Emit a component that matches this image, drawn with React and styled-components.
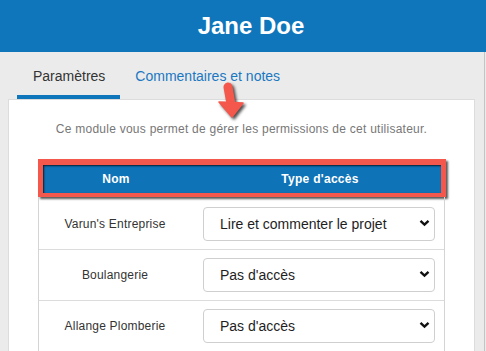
import React from "react";
import styled, { createGlobalStyle } from "styled-components";

const GlobalStyle = createGlobalStyle`
  html, body { margin: 0; padding: 0; }
  body {
    font-family: "Liberation Sans", Arial, sans-serif;
    background: #ebebeb;
  }
  * { box-sizing: border-box; }
`;

const Page = styled.div`
  position: relative;
  width: 486px;
  height: 351px;
  overflow: hidden;
  background: #ebebeb;
`;

const Header = styled.header`
  height: 52px;
  background: #0f76bc;
  color: #fff;
  display: flex;
  align-items: center;
  justify-content: center;
  padding-left: 16px;
  font-size: 24px;
  font-weight: 700;
`;

const Body = styled.div`
  width: 485px;
  height: 299px;
  border-right: 1px solid #c4c4c4;
  padding: 0 9px 0 8px;
  display: flex;
  flex-direction: column;
`;

const Tabs = styled.nav`
  display: flex;
  height: 47px;
  padding-left: 9px;
`;

const Tab = styled.div`
  height: 47px;
  padding: 4px ${(p) => (p.$active ? "15px" : "16px")} 0 ${(p) => (p.$active ? "16px" : "15px")};
  display: flex;
  align-items: center;
  font-size: 14px;
  color: ${(p) => (p.$active ? "#333" : "#1a78c2")};
  border-bottom: 4px solid ${(p) => (p.$active ? "#0f76bc" : "transparent")};
  white-space: nowrap;
`;

const Panel = styled.section`
  flex: 1;
  background: #fff;
  border: 1px solid #dcdcdc;
  border-bottom: none;
  padding: 21px 0 0 29px;
`;

const Description = styled.p`
  margin: 0 0 22px -29px;
  font-size: 12px;
  line-height: 16px;
  color: #777;
  text-align: center;
  letter-spacing: 0.25px;
`;

const Table = styled.div`
  width: 408px;
`;

const HeadBar = styled.div`
  height: 38px;
  border: 5px solid #f4574b;
  border-top-width: 6px;
  border-bottom-width: 4px;
  background: #0f73b8;
  box-shadow: inset 1px 1px 2px rgba(0, 0, 0, 0.75), 2px 2px 2px rgba(0, 0, 0, 0.65);
  display: grid;
  grid-template-columns: 146px 1fr;
  align-items: center;
  color: #fff;
  font-size: 12px;
  font-weight: 700;
  letter-spacing: 0.3px;
`;

const HeadCell = styled.div`
  text-align: center;
  padding-left: ${(p) => (p.$shift ? "10px" : "0")};
`;

const Rows = styled.div`
  width: 407px;
  border-left: 1px solid #d4d4d4;
  border-right: 1px solid #d4d4d4;
  padding-top: 2px;
`;

const Row = styled.div`
  display: grid;
  grid-template-columns: 156px 1fr;
  align-items: center;
  padding: 8px 9px 8px 0;
  border-bottom: 1px solid #dcdcdc;
`;

const NameCell = styled.div`
  text-align: center;
  font-size: 12px;
  color: #333;
  letter-spacing: 0.2px;
  padding-right: 4px;
`;

const SelectWrap = styled.div`
  position: relative;
  margin-left: 8px;
  height: 34px;
`;

const Select = styled.select`
  appearance: none;
  -webkit-appearance: none;
  width: 100%;
  height: 34px;
  border: 1px solid #cfcfcf;
  border-radius: 4px;
  background: #fff;
  padding: 0 24px 0 16px;
  font-family: "Liberation Sans", Arial, sans-serif;
  font-size: 14px;
  color: #1e1e1e;
  outline: none;
`;

const Chevron = styled.svg`
  position: absolute;
  right: 5px;
  top: 12px;
  width: 11px;
  height: 8px;
  pointer-events: none;
`;

const Pointer = styled.svg`
  position: absolute;
  left: 212px;
  top: 80px;
  width: 36px;
  height: 44px;
  overflow: visible;
  filter: drop-shadow(2px 2px 1.5px rgba(0, 0, 0, 0.7));
`;

const options = [
  "Pas d'accès",
  "Lire le projet",
  "Lire et commenter le projet",
  "Modifier le projet",
];

const rows = [
  { name: "Varun's Entreprise", access: "Lire et commenter le projet" },
  { name: "Boulangerie", access: "Pas d'accès" },
  { name: "Allange Plomberie", access: "Pas d'accès" },
];

export default function App() {
  return (
    <Page>
      <GlobalStyle />
      <Header>Jane Doe</Header>
      <Body>
        <Tabs>
          <Tab $active>Paramètres</Tab>
          <Tab>Commentaires et notes</Tab>
        </Tabs>
        <Panel>
          <Description>
            Ce module vous permet de gérer les permissions de cet utilisateur.
          </Description>
          <Table>
            <HeadBar>
              <HeadCell>Nom</HeadCell>
              <HeadCell $shift>Type d'accès</HeadCell>
            </HeadBar>
            <Rows>
              {rows.map((r) => (
                <Row key={r.name}>
                  <NameCell>{r.name}</NameCell>
                  <SelectWrap>
                    <Select defaultValue={r.access}>
                      {options.map((o) => (
                        <option key={o} value={o}>
                          {o}
                        </option>
                      ))}
                    </Select>
                    <Chevron viewBox="0 0 11 8">
                      <path
                        d="M1.5 1.8 L5.5 5.6 L9.5 1.8"
                        fill="none"
                        stroke="#111"
                        strokeWidth="2.4"
                      />
                    </Chevron>
                  </SelectWrap>
                </Row>
              ))}
            </Rows>
          </Table>
        </Panel>
      </Body>
      <Pointer viewBox="0 0 36 44">
        <path d="M16 7 L19 24" stroke="#f4574b" strokeWidth="9" strokeLinecap="round" fill="none" />
        <polygon points="7,22 31,23 20,37" fill="#f4574b" stroke="#f4574b" strokeWidth="1.5" strokeLinejoin="round" />
      </Pointer>
    </Page>
  );
}
